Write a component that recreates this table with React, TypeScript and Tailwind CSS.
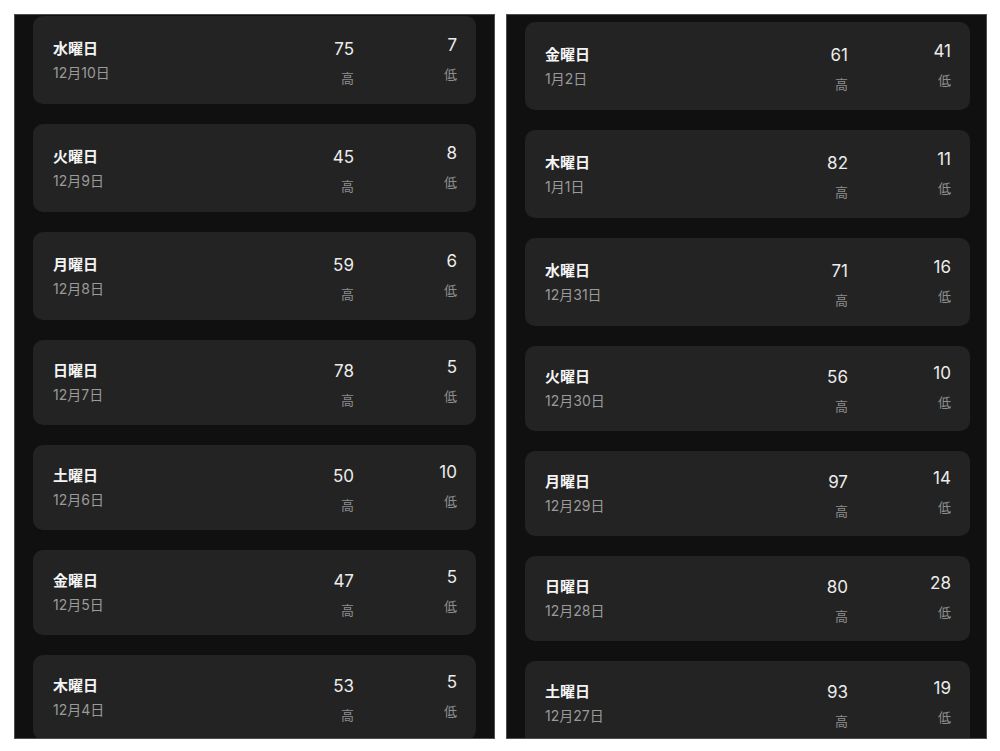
import React from "react";

type Day = {
    weekday: string;
    date: string;
    high: number;
    low: number;
    h: string;
};

const leftDays: Day[] = [
    { weekday: "水曜日", date: "12月10日", high: 75, low: 7, h: "h-[88px]" },
    { weekday: "火曜日", date: "12月9日", high: 45, low: 8, h: "h-[88px]" },
    { weekday: "月曜日", date: "12月8日", high: 59, low: 6, h: "h-[88px]" },
    { weekday: "日曜日", date: "12月7日", high: 78, low: 5, h: "h-[85px]" },
    { weekday: "土曜日", date: "12月6日", high: 50, low: 10, h: "h-[85px]" },
    { weekday: "金曜日", date: "12月5日", high: 47, low: 5, h: "h-[85px]" },
    { weekday: "木曜日", date: "12月4日", high: 53, low: 5, h: "h-[85px]" },
];

const rightDays: Day[] = [
    { weekday: "金曜日", date: "1月2日", high: 61, low: 41, h: "h-[88px]" },
    { weekday: "木曜日", date: "1月1日", high: 82, low: 11, h: "h-[88px]" },
    { weekday: "水曜日", date: "12月31日", high: 71, low: 16, h: "h-[88px]" },
    { weekday: "火曜日", date: "12月30日", high: 56, low: 10, h: "h-[85px]" },
    { weekday: "月曜日", date: "12月29日", high: 97, low: 14, h: "h-[85px]" },
    { weekday: "日曜日", date: "12月28日", high: 80, low: 28, h: "h-[85px]" },
    { weekday: "土曜日", date: "12月27日", high: 93, low: 19, h: "h-[85px]" },
];

const DayCard = ({ day }: { day: Day }) => {
    return (
        <div
            className={`${day.h} shrink-0 flex items-center justify-between rounded-[10px] bg-[#232323] pl-[20px] pr-[19px]`}
        >
            <div className="flex flex-col">
                <span className="text-[15px] leading-[20px] font-bold text-[#f4f4f4]">
                    {day.weekday}
                </span>
                <span className="mt-[5px] text-[14px] leading-[18px] text-[#9a9a9a]">
                    {day.date}
                </span>
            </div>

            <div className="flex items-center">
                <div className="flex flex-col items-end pt-[4px]">
                    <span className="text-[17px] leading-[20px] text-[#ececec]">
                        {day.high}
                    </span>
                    <span className="mt-[11px] text-[13px] leading-[16px] text-[#8d8d8d]">
                        高
                    </span>
                </div>
                <div className="w-[103px] flex flex-col items-end pb-[4px]">
                    <span className="text-[17px] leading-[20px] text-[#ececec]">
                        {day.low}
                    </span>
                    <span className="mt-[11px] text-[13px] leading-[16px] text-[#8d8d8d]">
                        低
                    </span>
                </div>
            </div>
        </div>
    );
};

const Panel = ({ days, inner }: { days: Day[]; inner: string }) => {
    return (
        <div className="w-[481px] h-[725px] overflow-hidden border border-[#4d4d4d] bg-[#101010]">
            <div className={`flex flex-col gap-5 ${inner}`}>
                {days.map((day) => (
                    <DayCard key={day.date} day={day} />
                ))}
            </div>
        </div>
    );
};

export default function App() {
    return (
        <div
            className="w-[1000px] h-[751px] bg-white flex gap-[11px] pl-[14px] pt-[14px]"
            style={{ fontFamily: 'Inter, "Noto Sans CJK JP", sans-serif' }}
        >
            <Panel days={leftDays} inner="pt-[1px] px-[18px]" />
            <Panel days={rightDays} inner="pt-[7px] pl-[18px] pr-[16px]" />
        </div>
    );
}
